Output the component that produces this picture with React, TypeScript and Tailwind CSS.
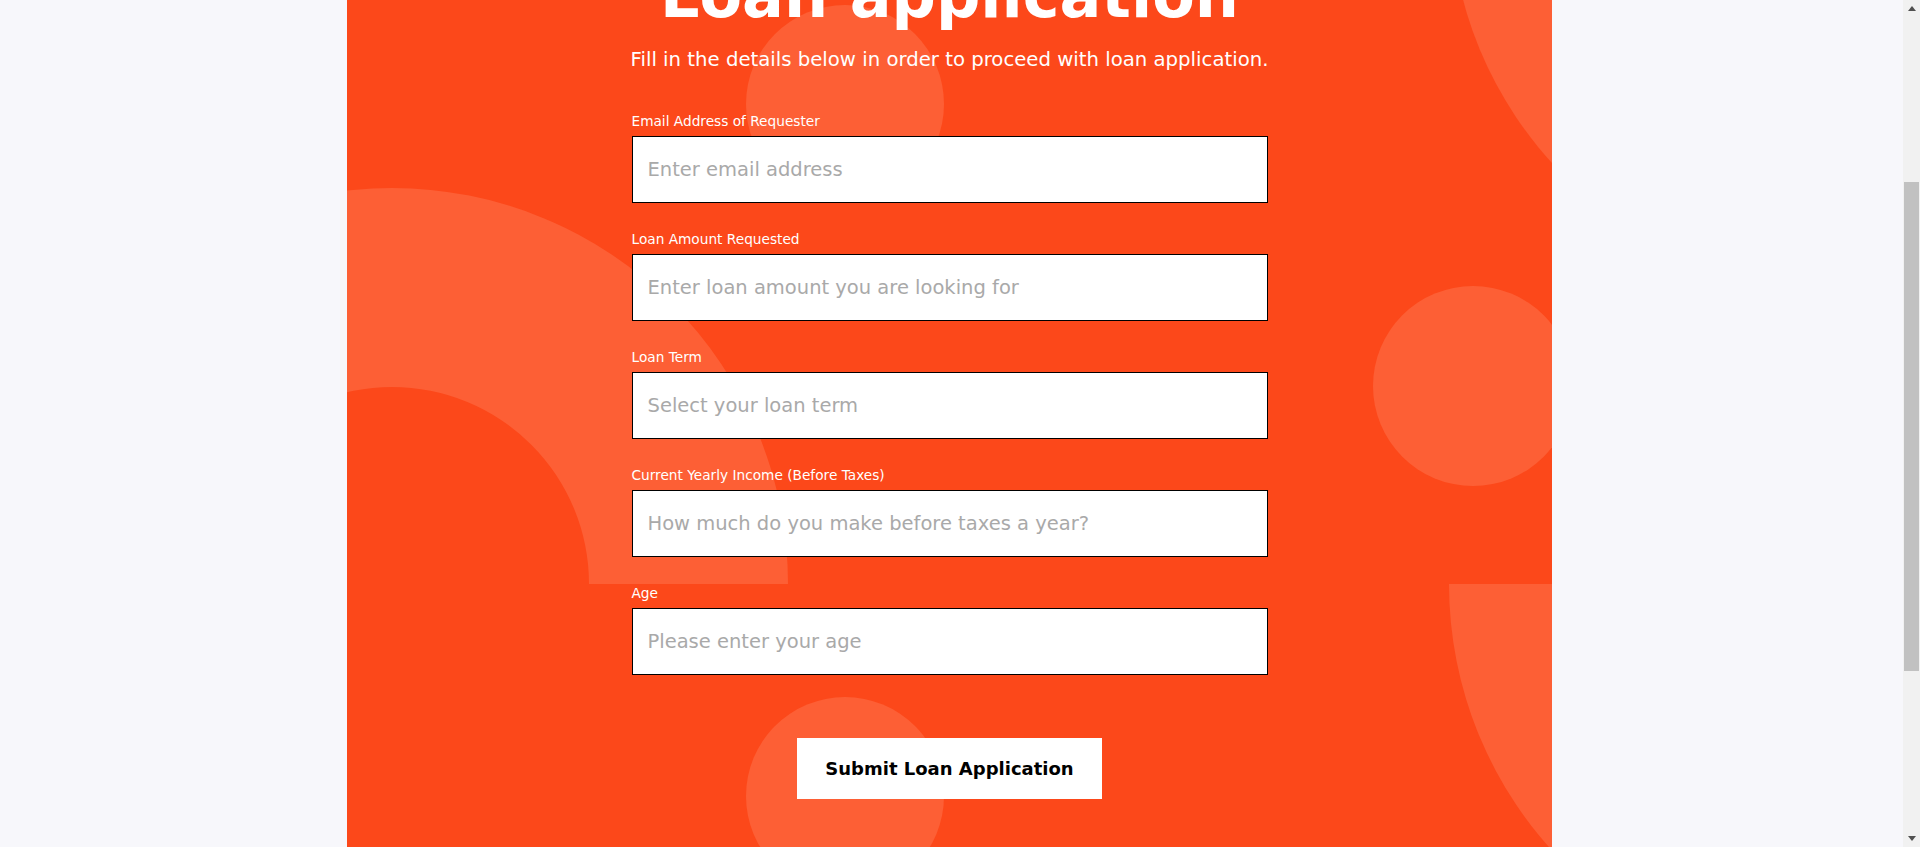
import { useLayoutEffect } from 'react';

const fields = [
  { id: 'email', label: 'Email Address of Requester', placeholder: 'Enter email address', type: 'email' },
  { id: 'amount', label: 'Loan Amount Requested', placeholder: 'Enter loan amount you are looking for', type: 'text' },
  { id: 'term', label: 'Loan Term', placeholder: 'Select your loan term', type: 'text' },
  { id: 'income', label: 'Current Yearly Income (Before Taxes)', placeholder: 'How much do you make before taxes a year?', type: 'text' },
  { id: 'age', label: 'Age', placeholder: 'Please enter your age', type: 'text' },
];

// background shapes of the orange panel
function Shapes() {
  return (
    <svg className="absolute inset-0 h-full w-full" viewBox="0 0 1205 1408" preserveAspectRatio="none" aria-hidden="true">
      <g fill="#fd5f35">
        <circle cx="1493" cy="186" r="390" />
        <circle cx="498" cy="390" r="99" />
        <circle cx="1126" cy="672" r="100" />
        <circle cx="498" cy="1082" r="99" />
        <path d="M -351 870 A 396 396 0 0 1 441 870 L 242 870 A 197 197 0 0 0 -152 870 Z" />
        <path d="M 1102 870 A 396 396 0 0 0 1894 870 L 1695 870 A 197 197 0 0 1 1301 870 Z" />
      </g>
    </svg>
  );
}

// classic window scrollbar, drawn over the right edge
function Scrollbar() {
  return (
    <div className="fixed right-0 top-0 flex h-screen w-[17px] flex-col bg-[#f1f1f1]">
      <div className="flex h-[17px] items-center justify-center">
        <svg width="8" height="5" viewBox="0 0 8 5"><path d="M0 5 L4 0 L8 5 Z" fill="#505050" /></svg>
      </div>
      <div className="flex-1">
        <div className="mx-[1px] mt-[165px] h-[489px] bg-[#c1c1c1]" />
      </div>
      <div className="flex h-[17px] items-center justify-center">
        <svg width="8" height="5" viewBox="0 0 8 5"><path d="M0 0 L8 0 L4 5 Z" fill="#505050" /></svg>
      </div>
    </div>
  );
}

export default function App() {
  useLayoutEffect(() => {
    window.scrollTo(0, 286);
  }, []);

  return (
    <div className="min-h-screen bg-[#f7f7fb] pr-[21px] font-['DejaVu_Sans',sans-serif]">
      <section className="relative mx-auto h-[1408px] w-[1205px] overflow-hidden bg-[#fc481a]">
        <Shapes />

        <div className="relative flex flex-col items-center pt-[245px] text-white">
          <h1 className="text-[62px] font-bold leading-[74px]">Loan application</h1>
          <p className="mt-[13px] text-[19.7px] leading-[28px]">
            Fill in the details below in order to proceed with loan application.
          </p>

          <form className="mt-[37px] flex w-[636px] flex-col gap-[26px]" onSubmit={(e) => e.preventDefault()}>
            {fields.map((f) => (
              <div key={f.id} className="flex flex-col gap-[5px]">
                <label htmlFor={f.id} className="text-[13.7px] leading-[20px]">
                  {f.label}
                </label>
                <input
                  id={f.id}
                  type={f.type}
                  placeholder={f.placeholder}
                  className="h-[67px] w-full border border-black bg-white px-[15px] text-[19.5px] text-black outline-none placeholder:text-[#a9a9a9]"
                />
              </div>
            ))}

            <div className="mt-[37px] flex justify-center">
              <button type="submit" className="h-[61px] w-[305px] bg-white text-[18px] font-bold text-black">
                Submit Loan Application
              </button>
            </div>
          </form>
        </div>
      </section>
      <Scrollbar />
    </div>
  );
}
